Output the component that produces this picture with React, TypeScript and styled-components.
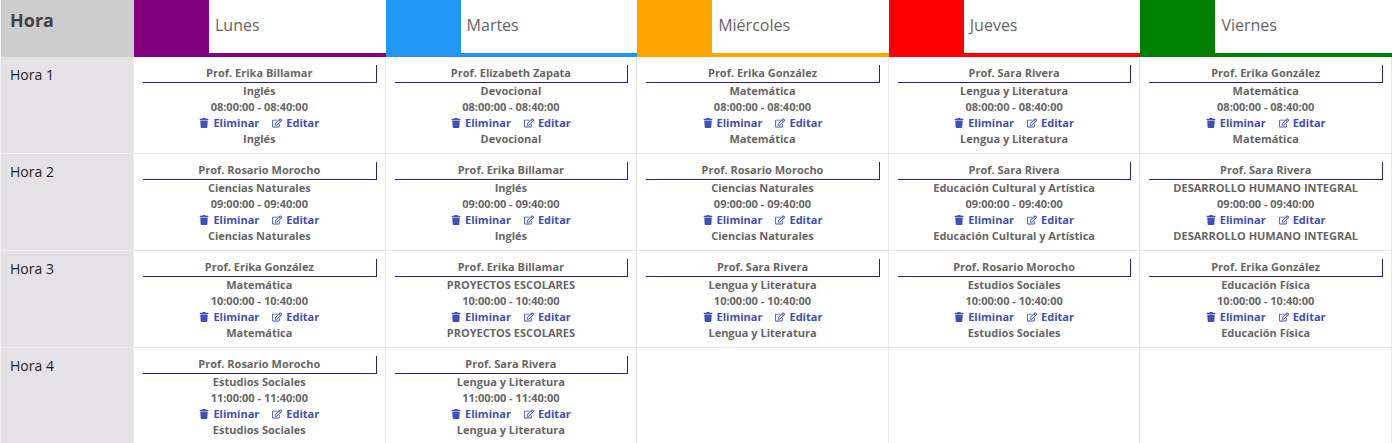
import React from "react";
import styled, { createGlobalStyle } from "styled-components";
import { FaTrash, FaRegEdit } from "react-icons/fa";

const GlobalStyle = createGlobalStyle`
  body {
    margin: 0;
    font-family: "Open Sans", "Liberation Sans", sans-serif;
    background: #fff;
  }
`;

interface IClase {
  prof: string;
  materia: string;
  inicio: string;
  fin: string;
}

const dias = [
  { nombre: "Lunes", color: "#800080" },
  { nombre: "Martes", color: "#2196f3" },
  { nombre: "Miércoles", color: "#ffa500" },
  { nombre: "Jueves", color: "#ff0000" },
  { nombre: "Viernes", color: "#008000" },
];

const c = (prof: string, materia: string, inicio: string, fin: string): IClase => ({
  prof,
  materia,
  inicio,
  fin,
});

const horario: (IClase | null)[][] = [
  [
    c("Prof. Erika Billamar", "Inglés", "08:00:00", "08:40:00"),
    c("Prof. Elizabeth Zapata", "Devocional", "08:00:00", "08:40:00"),
    c("Prof. Erika González", "Matemática", "08:00:00", "08:40:00"),
    c("Prof. Sara Rivera", "Lengua y Literatura", "08:00:00", "08:40:00"),
    c("Prof. Erika González", "Matemática", "08:00:00", "08:40:00"),
  ],
  [
    c("Prof. Rosario Morocho", "Ciencias Naturales", "09:00:00", "09:40:00"),
    c("Prof. Erika Billamar", "Inglés", "09:00:00", "09:40:00"),
    c("Prof. Rosario Morocho", "Ciencias Naturales", "09:00:00", "09:40:00"),
    c("Prof. Sara Rivera", "Educación Cultural y Artística", "09:00:00", "09:40:00"),
    c("Prof. Sara Rivera", "DESARROLLO HUMANO INTEGRAL", "09:00:00", "09:40:00"),
  ],
  [
    c("Prof. Erika González", "Matemática", "10:00:00", "10:40:00"),
    c("Prof. Erika Billamar", "PROYECTOS ESCOLARES", "10:00:00", "10:40:00"),
    c("Prof. Sara Rivera", "Lengua y Literatura", "10:00:00", "10:40:00"),
    c("Prof. Rosario Morocho", "Estudios Sociales", "10:00:00", "10:40:00"),
    c("Prof. Erika González", "Educación Física", "10:00:00", "10:40:00"),
  ],
  [
    c("Prof. Rosario Morocho", "Estudios Sociales", "11:00:00", "11:40:00"),
    c("Prof. Sara Rivera", "Lengua y Literatura", "11:00:00", "11:40:00"),
    null,
    null,
    null,
  ],
];

const Grid = styled.div`
  display: grid;
  grid-template-columns: 134px repeat(5, 1fr);
  grid-auto-rows: 97px;
  grid-template-rows: 57px;
  width: 1392px;
`;

const HoraHeader = styled.div`
  background-color: #cccccc;
  color: #444;
  font-size: 18px;
  font-weight: 700;
  padding: 8px 9px;
  border-left: 1px solid #f4f4f4;
`;

const DayHeader = styled.div<{ color: string }>`
  display: flex;
  border-bottom: 4px solid ${(props) => props.color};
  background: #fff;
`;

const ColorBlock = styled.div<{ color: string }>`
  width: 75px;
  background-color: ${(props) => props.color};
`;

const DayName = styled.div`
  flex: 1;
  padding: 14px 6px 0;
  font-size: 16px;
  color: #666;
`;

const HoraCell = styled.div`
  background-color: #e4e2e4;
  color: #222;
  font-size: 14px;
  font-weight: 500;
  padding: 8px 9px;
  border-left: 1px solid #f4f4f4;
  border-bottom: 1px solid #f0f0f0;
  border-right: 1px solid #ececec;
`;

const Cell = styled.div`
  border-right: 1px solid #e8e8e8;
  border-bottom: 1px solid #e8e8e8;
  padding-top: 8px;
  overflow: hidden;
`;

const Card = styled.div`
  display: flex;
  flex-direction: column;
  text-align: center;
  font-size: 11px;
  font-weight: 700;
  color: #666;
  line-height: 16px;
`;

const ProfBox = styled.div`
  margin: 0 8px 0 9px;
  height: 17px;
  line-height: 16px;
  border-right: 1px solid #2c1ba0;
  border-bottom: 1px solid #2c1ba0;
`;

const Actions = styled.div`
  display: flex;
  justify-content: center;
  gap: 13px;
  color: #3f4fb5;
`;

const Action = styled.span`
  display: inline-flex;
  align-items: center;
  gap: 4px;
  svg {
    font-size: 10px;
  }
`;

const Clase = ({ clase }: { clase: IClase }) => (
  <Card>
    <ProfBox>{clase.prof}</ProfBox>
    <div>{clase.materia}</div>
    <div>
      {clase.inicio} - {clase.fin}
    </div>
    <Actions>
      <Action>
        <FaTrash />
        Eliminar
      </Action>
      <Action>
        <FaRegEdit />
        Editar
      </Action>
    </Actions>
    <div>{clase.materia}</div>
  </Card>
);

const App = () => {
  return (
    <>
      <GlobalStyle />
      <Grid>
        <HoraHeader>Hora</HoraHeader>
        {dias.map((dia) => (
          <DayHeader key={dia.nombre} color={dia.color}>
            <ColorBlock color={dia.color} />
            <DayName>{dia.nombre}</DayName>
          </DayHeader>
        ))}
        {horario.map((fila, i) => (
          <React.Fragment key={i}>
            <HoraCell>Hora {i + 1}</HoraCell>
            {fila.map((clase, j) => (
              <Cell key={j}>{clase && <Clase clase={clase} />}</Cell>
            ))}
          </React.Fragment>
        ))}
      </Grid>
    </>
  );
};

export default App;
